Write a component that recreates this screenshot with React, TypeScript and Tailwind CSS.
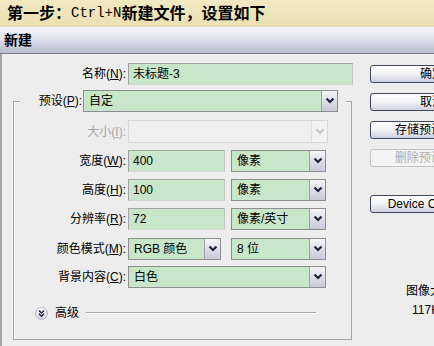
import React from "react";

const font = "font-['Liberation_Sans','Noto_Sans_CJK_SC',sans-serif]";

function Chevron({ disabled }: { disabled?: boolean }) {
  return (
    <svg width="10" height="8" viewBox="0 0 10 8">
      <path
        d="M1.5 1.5 L5 5 L8.5 1.5"
        fill="none"
        stroke={disabled ? "#c8c8c8" : "#1d2540"}
        strokeWidth="2.2"
      />
    </svg>
  );
}

function Input({ value, w, h = 22 }: { value: string; w: number; h?: number }) {
  return (
    <div
      className="flex items-center border border-[#a2a2a2] border-b-[#d6d6d6] border-r-[#c4c4c4] bg-[#c8e6c8] pl-[4px] text-[12px] text-black"
      style={{ width: w, height: h }}
    >
      {value}
    </div>
  );
}

function Select({ value, w, h = 22, disabled }: { value: string; w: number; h?: number; disabled?: boolean }) {
  return (
    <div
      className={`flex border ${disabled ? "border-[#d8d8d8] bg-[#efefef]" : "border-[#8e8e8e] bg-[#c8e6c8]"}`}
      style={{ width: w, height: h }}
    >
      <div className="flex flex-1 items-center pl-[5px] text-[12px] text-black">{value}</div>
      <div
        className={`flex w-[16px] items-center justify-center border-l ${
          disabled
            ? "border-[#e0e0e0] bg-[#f2f2f2]"
            : "border-[#a0a0b0] bg-gradient-to-b from-[#f4f4f8] to-[#c9c9d8]"
        }`}
      >
        <Chevron disabled={disabled} />
      </div>
    </div>
  );
}

function Label({ w, children, disabled }: { w: number; children: React.ReactNode; disabled?: boolean }) {
  return (
    <div
      className={`flex shrink-0 items-center justify-end text-[12px] ${disabled ? "text-[#a8a8a8]" : "text-black"}`}
      style={{ width: w }}
    >
      {children}
    </div>
  );
}

function Btn({ children, disabled, className = "" }: { children: React.ReactNode; disabled?: boolean; className?: string }) {
  return (
    <div
      className={`flex h-[18px] w-[124px] shrink-0 items-center justify-center rounded-[3px] border text-[12px] ${
        disabled
          ? "border-[#c4c4c4] bg-[#f3f3f3] text-[#b0b0b0]"
          : "border-[#3e4660] bg-gradient-to-b from-[#ffffff] via-[#f2f2f6] to-[#cfd1e0] text-black"
      } ${className}`}
    >
      {children}
    </div>
  );
}

function Row({ label, children, mt, disabled }: { label: React.ReactNode; children: React.ReactNode; mt: number; disabled?: boolean }) {
  return (
    <div className="flex" style={{ marginTop: mt }}>
      <Label w={112} disabled={disabled}>
        {label}
      </Label>
      <div className="ml-[2px] flex gap-[6px]">{children}</div>
    </div>
  );
}

export default function App() {
  return (
    <div className={`h-[346px] w-[434px] overflow-hidden bg-[#ededed] ${font}`}>
      {/* banner */}
      <div className="flex h-[27px] items-center bg-gradient-to-b from-[#f1e9c2] to-[#ebe0b0] pl-[7px] text-[16px] font-bold text-black">
        <span>第一步：</span>
        <span className="font-['Liberation_Mono',monospace] text-[14px] font-normal">Ctrl+N</span>
        <span>新建文件，设置如下</span>
      </div>
      {/* title bar */}
      <div className="flex h-[27px] items-center border-b border-[#7d7f8c] bg-gradient-to-b from-[#f8f8fb] via-[#dcdee8] to-[#b8bccc] pl-[4px] text-[14px] font-bold text-black">
        新建
      </div>
      {/* body */}
      <div className="flex h-[292px] shadow-[inset_2px_0_0_#a4a4a4]">
        <div className="w-[360px] shrink-0 pt-[9px]">
          <div className="flex">
            <Label w={126}>
              名称(<u>N</u>):
            </Label>
            <div className="ml-[2px]">
              <Input value="未标题-3" w={225} />
            </div>
          </div>
          <div className="ml-[13px] mt-[16px] h-[239px] w-[339px] border border-[#a6a6a6] shadow-[inset_1px_1px_0_#ffffff]">
            {/* preset row over the top border */}
            <div className="-mt-[12px] ml-[6px] flex w-[326px] bg-[#ededed] pr-[8px]">
              <Label w={62}>
                预设(<u>P</u>):
              </Label>
              <div className="ml-[1px]">
                <Select value="自定" w={255} />
              </div>
            </div>
            <Row mt={8} label={<>大小(<u>I</u>):</>} disabled>
              <Select value="" w={200} h={23} disabled />
            </Row>
            <Row mt={7} label={<>宽度(<u>W</u>):</>}>
              <Input value="400" w={97} />
              <Select value="像素" w={95} />
            </Row>
            <Row mt={7} label={<>高度(<u>H</u>):</>}>
              <Input value="100" w={97} />
              <Select value="像素" w={95} />
            </Row>
            <Row mt={7} label={<>分辨率(<u>R</u>):</>}>
              <Input value="72" w={97} />
              <Select value="像素/英寸" w={95} />
            </Row>
            <Row mt={8} label={<>颜色模式(<u>M</u>):</>}>
              <Select value="RGB 颜色" w={93} />
              <div className="ml-[4px]">
                <Select value="8 位" w={95} />
              </div>
            </Row>
            <Row mt={6} label={<>背景内容(<u>C</u>):</>}>
              <Select value="白色" w={198} />
            </Row>
            <div className="ml-[21px] mr-[35px] mt-[17px] flex h-[16px] items-center">
              <svg width="13" height="13" viewBox="0 0 13 13">
                <defs>
                  <linearGradient id="cg" x1="0" y1="0" x2="0" y2="1">
                    <stop offset="0" stopColor="#ffffff" />
                    <stop offset="1" stopColor="#d4d4dc" />
                  </linearGradient>
                </defs>
                <circle cx="6.5" cy="6.5" r="6" fill="url(#cg)" stroke="#b4b4bc" strokeWidth="1" />
                <path d="M4 3.5 L6.5 6 L9 3.5 M4 6.8 L6.5 9.3 L9 6.8" fill="none" stroke="#1d2540" strokeWidth="1.4" />
              </svg>
              <span className="ml-[7px] text-[12px] text-black">高级</span>
              <div className="ml-[7px] h-[2px] flex-1 border-t border-[#a8a8a8] border-b border-b-white" />
            </div>
          </div>
        </div>
        <div className="ml-[10px] flex flex-col pt-[11px]">
          <Btn>确定</Btn>
          <Btn className="mt-[10px]">取消</Btn>
          <Btn className="mt-[10px]">存储预设(S)...</Btn>
          <Btn className="mt-[10px]" disabled>
            删除预设(D)...
          </Btn>
          <Btn className="mt-[28px]">Device Central...</Btn>
          <div className="ml-[36px] mt-[70px] text-[12px] leading-[16px] text-black">图像大小:</div>
          <div className="ml-[42px] mt-[3px] text-[12px] leading-[16px] text-black">117K</div>
        </div>
      </div>
    </div>
  );
}
